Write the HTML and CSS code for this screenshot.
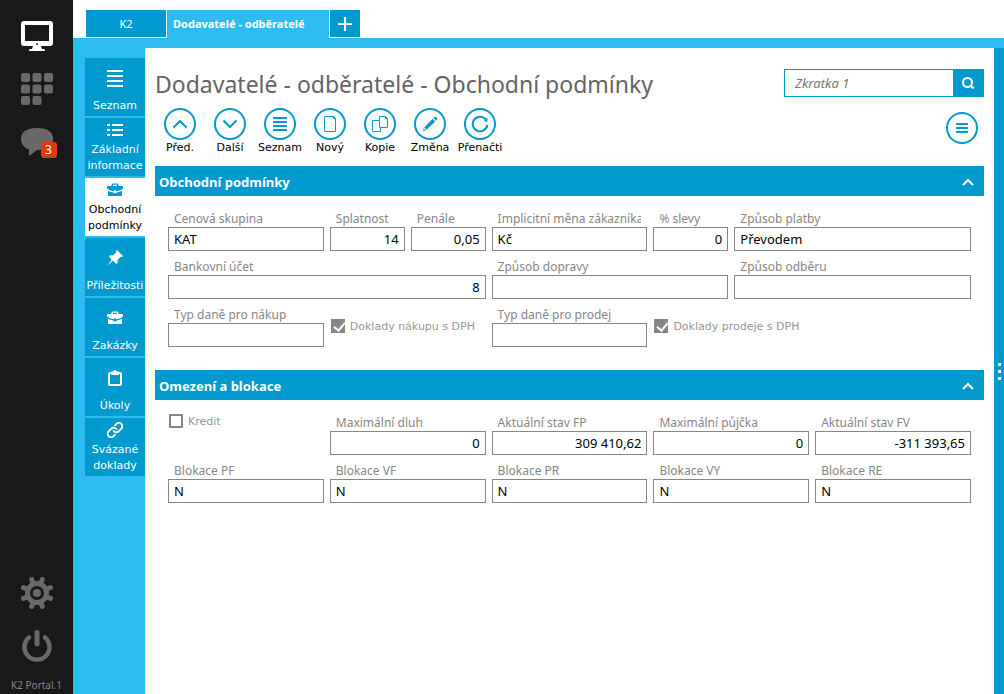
FILE: index.html
```html
<!DOCTYPE html>
<html lang="cs">
<head>
<meta charset="utf-8">
<title>K2 Portal</title>
<link rel="stylesheet" href="styles.css">
</head>
<body>
<div class="app">
  <aside class="rail">
    <div class="rail-group">
      <button class="rail-btn" aria-label="Plocha"><svg width="32" height="32" viewBox="0 0 32 32"><path fill="#fff" fill-rule="evenodd" d="M3 1h26a3 3 0 0 1 3 3v19a3 3 0 0 1-3 3h-9l1 3h2q1 0 1 2H8q0-2 1-2h2l1-3H3a3 3 0 0 1-3-3V4a3 3 0 0 1 3-3zM4 5v16h24V5z"/><circle cx="16" cy="24" r="1" fill="#191919"/></svg></button>
      <button class="rail-btn" aria-label="Aplikace"><svg width="32" height="32" viewBox="0 0 32 32" fill="#696969"><rect width="9" height="9" rx="2"/><rect x="11.500" width="9" height="9" rx="2"/><rect x="23" width="9" height="9" rx="2"/><rect y="11.500" width="9" height="9" rx="2"/><rect x="11.500" y="11.500" width="9" height="9" rx="2"/><rect x="23" y="11.500" width="9" height="9" rx="2"/><rect y="23" width="9" height="9" rx="2"/><rect x="11.500" y="23" width="9" height="9" rx="2"/></svg></button>
      <button class="rail-btn chat" aria-label="Zprávy"><svg width="32" height="32" viewBox="0 0 32 32" fill="#696969"><path d="M16 2C27 2 32 6 32 13s-5 11-16 11L8 30v-6.500C3 22 0 18 0 13 0 6 5 2 16 2z"/></svg><span class="badge">3</span></button>
    </div>
    <div class="rail-group rail-bottom">
      <button class="rail-btn" aria-label="Nastavení"><svg width="32" height="32" viewBox="-16 -16 32 32" stroke="#696969" fill="none"><circle r="9.500" stroke-width="5"/><circle r="4" fill="#696969" stroke="none"/><g stroke-width="5" stroke-linecap="round"><path d="M-4-10l-1.300-3.500M4-10l1.300-3.500M10-4l3.500-1.300M10 4l3.500 1.300M4 10l1.300 3.500M-4 10l-1.300 3.500M-10 4l-3.500 1.300M-10-4l-3.500-1.300"/></g></svg></button>
      <button class="rail-btn" aria-label="Odhlásit"><svg width="32" height="32" viewBox="0 0 32 32" fill="none" stroke="#696969" stroke-linecap="round"><path stroke-width="5" d="M16 2.500v11.500"/><path stroke-width="4.500" d="M8 7.500a12.500 12.500 0 1 0 16 0"/></svg></button>
      <p class="version">K2 Portal.1</p>
    </div>
  </aside>

  <div class="workspace">
    <nav class="tabs">
      <button class="tab">K2</button>
      <button class="tab tab-active">Dodavatelé - odběratelé</button>
      <button class="tab tab-add" aria-label="Nová záložka"><svg width="14" height="14" viewBox="0 0 14 14"><path d="M7 0v14M0 7h14" stroke="#fff" stroke-width="2"/></svg></button>
    </nav>
    <div class="body">
      <nav class="side">
        <button class="side-btn"><svg width="16" height="24" viewBox="0 0 16 24"><path d="M0 5h16M0 10h16M0 15h16M0 20h16" stroke="#fff" stroke-width="2"/></svg><span>Seznam</span></button>
        <button class="side-btn two"><svg width="16" height="16" viewBox="0 0 16 16"><path d="M0 3h3M5 3h11M0 8h3M5 8h11M0 13h3M5 13h11" stroke="#fff" stroke-width="2"/></svg><span>Základní informace</span></button>
        <button class="side-btn two current"><svg width="16" height="16" viewBox="0 0 16 16"><path fill="#009acf" d="M4.500 4V3Q4.500 1.500 6 1.500h4q1.500 0 1.500 1.500v1H15q1 0 1 1v1.500Q13 9 9.500 9.200V8.500h-3v.7Q3 9 0 6.500V5q0-1 1-1zM6 4h4V2.800H6zM1 8.700q3 1.800 5.500 1.800v.8h3v-.8Q12 10.500 15 8.700V13q0 1-1 1H2q-1 0-1-1z"/></svg><span>Obchodní podmínky</span></button>
        <button class="side-btn"><svg width="16" height="24" viewBox="0 0 16 24"><path fill="#fff" d="M10 4l6 6-1 1-1.500-.3-3 3.300.2 3-1.500 1-3.400-3.500L0 20l4.500-6.200L2 10.500l1-1.200 3 .2 3.300-3L9 5z"/></svg><span>Příležitosti</span></button>
        <button class="side-btn"><svg width="16" height="24" viewBox="0 -4 16 24"><path fill="#fff" d="M4.500 4V3Q4.500 1.500 6 1.500h4q1.500 0 1.500 1.500v1H15q1 0 1 1v1.500Q13 9 9.500 9.200V8.500h-3v.7Q3 9 0 6.500V5q0-1 1-1zM6 4h4V2.800H6zM1 8.700q3 1.800 5.500 1.800v.8h3v-.8Q12 10.500 15 8.700V13q0 1-1 1H2q-1 0-1-1z"/></svg><span>Zakázky</span></button>
        <button class="side-btn"><svg width="16" height="24" viewBox="0 0 16 24"><rect x="2" y="7" width="12" height="12" rx="1" fill="none" stroke="#fff" stroke-width="2"/><path fill="#fff" d="M4 5.500h2Q6.500 4 8 4t2 1.500h2V9H4z"/></svg><span>Úkoly</span></button>
        <button class="side-btn two"><svg width="16" height="16" viewBox="0 0 24 24"><path fill="none" stroke="#fff" stroke-width="2.800" stroke-linecap="round" stroke-linejoin="round" d="M10 13.500a5 5 0 0 0 7.500.5l4-4a5 5 0 0 0-7.300-7.300L12 5M14 10.500a5 5 0 0 0-7.500-.5l-4 4a5 5 0 0 0 7.300 7.300L12 19"/></svg><span>Svázané doklady</span></button>
      </nav>

      <main class="content">
        <header class="head">
          <h1>Dodavatelé - odběratelé - Obchodní podmínky</h1>
          <form class="search"><input type="text" aria-label="Hledat" placeholder="Zkratka 1"><button type="button" aria-label="Hledat"><svg width="14" height="14" viewBox="0 0 14 14" fill="none" stroke="#fff" stroke-width="2"><circle cx="6.500" cy="6.500" r="4.500"/><path d="M9.500 9.500l3 3"/></svg></button></form>
        </header>
        <div class="toolbar">
          <button class="tool"><svg width="32" height="32" viewBox="0 0 32 32"><circle cx="16" cy="16" r="15"/><path d="M9.500 19.500L16 13l6.500 6.500"/></svg><span>Před.</span></button>
          <button class="tool"><svg width="32" height="32" viewBox="0 0 32 32"><circle cx="16" cy="16" r="15"/><path d="M9.500 12.500L16 19l6.500-6.500"/></svg><span>Další</span></button>
          <button class="tool"><svg width="32" height="32" viewBox="0 0 32 32"><circle cx="16" cy="16" r="15"/><path d="M9 10h14M9 14h14M9 18h14M9 22h14"/></svg><span>Seznam</span></button>
          <button class="tool"><svg width="32" height="32" viewBox="0 0 32 32"><circle cx="16" cy="16" r="15"/><path class="thin" d="M10.500 8.500h9l2 2v13h-11zM19.500 8.500v2h2"/></svg><span>Nový</span></button>
          <button class="tool"><svg width="32" height="32" viewBox="0 0 32 32"><circle cx="16" cy="16" r="15"/><path class="thin" d="M15.500 12.500h-7v11h8v-4M15.500 8.500h6l2 2v9h-8zM21.500 8.500v2h2"/></svg><span>Kopie</span></button>
          <button class="tool"><svg width="32" height="32" viewBox="0 0 32 32"><circle cx="16" cy="16" r="15"/><path class="solid" d="M18.500 10.800l2.700 2.700-8.700 8.200-2.200-2.200zM19.500 10l1-1q1-.8 2.200.4t.3 2.300l-1 1zM9.600 20.200l2.200 2L9 23z"/></svg><span>Změna</span></button>
          <button class="tool"><svg width="32" height="32" viewBox="0 0 32 32"><circle cx="16" cy="16" r="15"/><path d="M21.800 11.500A7.300 7.300 0 1 0 23.300 17"/><path class="solid" d="M23.500 9.500v4h-4z"/></svg><span>Přenačti</span></button>
          <button class="more" aria-label="Nabídka"><svg width="32" height="32" viewBox="0 0 32 32"><circle cx="16" cy="16" r="15"/><path d="M10 12h12M10 16h12M10 20h12"/></svg></button>
        </div>

        <section class="panel">
          <h2>Obchodní podmínky<button aria-label="Sbalit"><svg width="12" height="10" viewBox="0 0 12 10"><path d="M1 8l5-5 5 5" fill="none" stroke="#fff" stroke-width="2"/></svg></button></h2>
          <div class="fields">
            <label class="field w2"><span>Cenová skupina</span><input type="text" value="KAT"></label>
            <label class="field"><span>Splatnost</span><input class="num" type="text" value="14"></label>
            <label class="field"><span>Penále</span><input class="num" type="text" value="0,05"></label>
            <label class="field w2"><span>Implicitní měna zákazníka</span><input type="text" value="Kč"></label>
            <label class="field"><span>% slevy</span><input class="num" type="text" value="0"></label>
            <label class="field w3"><span>Způsob platby</span><input type="text" value="Převodem"></label>
            <label class="field w4"><span>Bankovní účet</span><input class="num" type="text" value="8"></label>
            <label class="field w3"><span>Způsob dopravy</span><input type="text"></label>
            <label class="field w3"><span>Způsob odběru</span><input type="text"></label>
            <label class="field w2"><span>Typ daně pro nákup</span><input type="text"></label>
            <label class="check w2"><input type="checkbox" checked><span>Doklady nákupu s DPH</span></label>
            <label class="field w2"><span>Typ daně pro prodej</span><input type="text"></label>
            <label class="check w2"><input type="checkbox" checked><span>Doklady prodeje s DPH</span></label>
          </div>
        </section>

        <section class="panel">
          <h2>Omezení a blokace<button aria-label="Sbalit"><svg width="12" height="10" viewBox="0 0 12 10"><path d="M1 8l5-5 5 5" fill="none" stroke="#fff" stroke-width="2"/></svg></button></h2>
          <div class="fields">
            <label class="check top w2"><input type="checkbox"><span>Kredit</span></label>
            <label class="field w2"><span>Maximální dluh</span><input class="num" type="text" value="0"></label>
            <label class="field w2"><span>Aktuální stav FP</span><input class="num" type="text" value="309 410,62"></label>
            <label class="field w2"><span>Maximální půjčka</span><input class="num" type="text" value="0"></label>
            <label class="field w2"><span>Aktuální stav FV</span><input class="num" type="text" value="-311 393,65"></label>
            <label class="field w2"><span>Blokace PF</span><input type="text" value="N"></label>
            <label class="field w2"><span>Blokace VF</span><input type="text" value="N"></label>
            <label class="field w2"><span>Blokace PR</span><input type="text" value="N"></label>
            <label class="field w2"><span>Blokace VY</span><input type="text" value="N"></label>
            <label class="field w2"><span>Blokace RE</span><input type="text" value="N"></label>
          </div>
        </section>
      </main>
      <div class="drawer"><i></i><i></i><i></i></div>
    </div>
  </div>
</div>
</body>
</html>
```

FILE: styles.css
```css
* { box-sizing: border-box; }
body { margin: 0; font: 12px/16px "Noto Sans", "Open Sans", sans-serif; color: #000; background: #fff; }
button { border: 0; padding: 0; margin: 0; background: none; font: inherit; color: inherit; }
svg { display: block; flex: none; }
.app { display: flex; min-height: 100vh; }

.rail { width: 73px; flex: none; background: #191919; display: flex; flex-direction: column; justify-content: space-between; padding: 20px 0 1px; }
.rail-group { display: flex; flex-direction: column; align-items: center; gap: 21px; }
.rail-btn { position: relative; }
.badge { position: absolute; left: 20px; top: 16px; width: 16px; height: 16px; border-radius: 3px; background: #dc3c14; color: #fff; }
.version { margin: -6px 0 0; font-size: 10px; color: #858585; white-space: nowrap; }

.workspace { flex: 1; min-width: 0; display: flex; flex-direction: column; }
.tabs { display: flex; gap: 1px; padding: 10px 13px 0; border-bottom: 10px solid #2dbbf0; }
.tab { width: 80px; height: 27px; margin-bottom: 1px; background: #009acf; color: #fff; font-size: 11px; display: flex; align-items: center; justify-content: center; }
.tab-active { width: auto; min-width: 162px; height: 28px; margin-bottom: 0; padding: 0 6px; background: #2dbbf0; font-weight: 700; justify-content: flex-start; }
.tab-add { width: 30px; }
.body { flex: 1; display: flex; }
.side { width: 72px; flex: none; background: #2dbbf0; padding: 10px 0 0 12px; display: flex; flex-direction: column; gap: 2px; }
.side-btn { height: 58px; background: #009acf; color: #fff; font: 11px/16px "DejaVu Sans", sans-serif; display: flex; flex-direction: column; align-items: center; justify-content: space-between; padding: 8px 0 2px; }
.side-btn.two { padding-top: 4px; }
.side-btn.current { background: #fff; color: #000; }

.content { flex: 1; min-width: 0; padding: 20px 10px 0; }
.head { display: flex; justify-content: space-between; align-items: flex-start; height: 32px; margin-bottom: 8px; }
h1 { margin: 0; font-size: 23px; line-height: 32px; font-weight: 400; color: #646464; white-space: nowrap; }
.search { display: flex; width: 200px; height: 28px; margin-top: 1px; border: 1px solid #009acf; }
.search input { flex: 1; min-width: 0; border: 0; padding: 0 10px; outline: 0; font: italic 13px "Noto Sans", sans-serif; }
.search input::placeholder { color: #787878; opacity: 1; }
.search button { width: 30px; background: #009acf; display: flex; align-items: center; justify-content: center; }
.toolbar { display: flex; height: 58px; }
.toolbar svg { fill: none; stroke: #009acf; stroke-width: 2; }
.toolbar .thin { stroke-width: 1; }
.toolbar .solid { fill: #009acf; stroke: none; }
.tool { width: 50px; display: flex; flex-direction: column; align-items: center; font: 11px/16px "DejaVu Sans", sans-serif; }
.more { margin: 4px 6px 0 auto; align-self: flex-start; }

.panel { margin-bottom: 23px; }
h2 { margin: 0; height: 30px; padding: 2px 10px 0 4px; background: #009acf; color: #fff; font-size: 13px; display: flex; align-items: center; justify-content: space-between; }
.fields { display: grid; grid-template-columns: repeat(10, minmax(0, 1fr)); gap: 6px; padding: 13px 13px 0; }
.w2 { grid-column: span 2; }
.w3 { grid-column: span 3; }
.w4 { grid-column: span 4; }
.field { min-width: 0; color: #878787; }
.field span { display: block; height: 18px; line-height: 20px; padding-left: 6px; margin-right: 6px; white-space: nowrap; overflow: hidden; }
.field input { display: block; width: 100%; height: 24px; border: 1px solid #878787; padding: 0 5px; font: 13px "Noto Sans", sans-serif; color: #000; background: #fff; }
.field .num { text-align: right; }
.check { display: flex; align-items: flex-start; gap: 5px; padding: 14px 0 0 1px; font: 11px/16px "DejaVu Sans", sans-serif; color: #969696; white-space: nowrap; }
.check.top { padding-top: 1px; }
.check input { appearance: none; flex: none; width: 14px; height: 14px; margin: 0; border: 2px solid #878787; background: #fff; }
.check input:checked { background: #878787; }
.check input:checked::before { content: ""; display: block; width: 5px; height: 9px; margin: -1px 0 0 3px; border: solid #fff; border-width: 0 2px 2px 0; transform: rotate(40deg); }
.drawer { width: 10px; flex: none; background: #009acf; display: flex; flex-direction: column; align-items: flex-end; justify-content: center; gap: 4px; padding-right: 3px; }
.drawer i { width: 3px; height: 3px; background: #fff; }
```
